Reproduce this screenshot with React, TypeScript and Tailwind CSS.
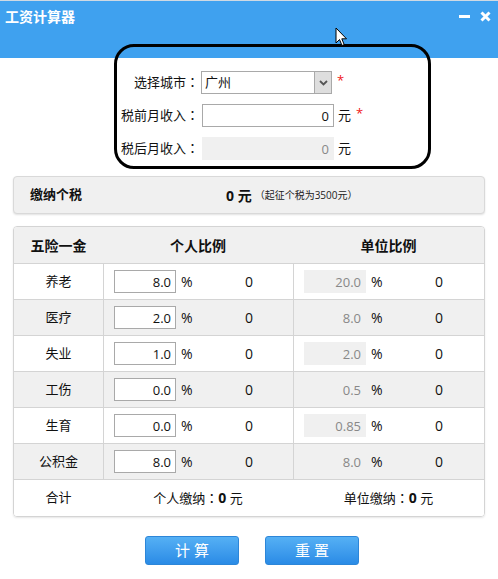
import React from 'react';

const rows = [
  { name: '养老', personal: '8.0', company: '20.0' },
  { name: '医疗', personal: '2.0', company: '8.0' },
  { name: '失业', personal: '1.0', company: '2.0' },
  { name: '工伤', personal: '0.0', company: '0.5' },
  { name: '生育', personal: '0.0', company: '0.85' },
  { name: '公积金', personal: '8.0', company: '8.0' },
];

// full-width colon, centred like the YaHei one in the design
function Colon() {
  return <span className="font-['Noto_Sans_CJK_TC',sans-serif]">：</span>;
}

function RateCell({ value, editable }: { value: string; editable: boolean }) {
  return (
    <div className="flex h-full items-center border-l border-[#d4d4d4] pl-[10px]">
      {editable ? (
        <input
          defaultValue={value}
          className="h-[23px] w-[62px] border border-[#a9a9a9] bg-white pr-[4px] text-right text-[13px] text-[#111] outline-none"
        />
      ) : (
        <input
          readOnly
          value={value}
          className="h-[23px] w-[62px] bg-[#f0f0f0] pr-[5px] text-right text-[13px] text-[#888] outline-none"
        />
      )}
      <span className="ml-[5px] w-[16px] text-[14px] text-[#111]">%</span>
      <span className="ml-[32px] w-[40px] text-center text-[14px] text-[#111]">0</span>
    </div>
  );
}

function Asterisk() {
  return <span className="ml-[5px] -mt-[4px] text-[13px] text-[#f01818]">*</span>;
}

export default function App() {
  return (
    <div className="relative h-[579px] w-[498px] overflow-hidden bg-white font-['Open_Sans','Noto_Sans_CJK_SC',sans-serif] text-[#111]">
      <header className="flex h-[58px] items-start justify-between border-t border-[#cfd9e3] bg-[#3fa1ef] px-[5px] pt-[6px]">
        <h1 className="text-[14px] font-bold leading-[20px] text-white">工资计算器</h1>
        <div className="mr-[2px] mt-[4px] flex items-center gap-[10px]">
          <span className="block h-[3px] w-[11px] bg-white" />
          <svg width="11" height="11" viewBox="0 0 11 11">
            <path d="M1.5 1.5 L9.5 9.5 M9.5 1.5 L1.5 9.5" stroke="white" strokeWidth="3" />
          </svg>
        </div>
      </header>

      <section className="flex flex-col gap-[10px] pt-[13px]">
        <div className="flex h-[23px] items-center">
          <label className="w-[201px] pr-[2px] text-right text-[13px]">
            选择城市<Colon />
          </label>
          <div className="flex h-[23px] w-[131px] items-center border border-[#a9a9a9] bg-white">
            <span className="flex-1 pl-[3px] text-[13px]">广州</span>
            <span className="flex h-full w-[17px] items-center justify-center border-l border-[#a9a9a9] bg-[#dedede]">
              <svg width="9" height="6" viewBox="0 0 9 6">
                <path d="M1 1 L4.5 4.5 L8 1" fill="none" stroke="#555" strokeWidth="1.8" />
              </svg>
            </span>
          </div>
          <Asterisk />
        </div>
        <div className="flex h-[23px] items-center">
          <label className="w-[202px] pr-[3px] text-right text-[13px]">
            税前月收入<Colon />
          </label>
          <input
            defaultValue="0"
            className="h-[23px] w-[132px] border border-[#a9a9a9] bg-white pr-[4px] text-right text-[13px] outline-none"
          />
          <span className="ml-[4px] text-[13px]">元</span>
          <Asterisk />
        </div>
        <div className="flex h-[23px] items-center">
          <label className="w-[202px] pr-[3px] text-right text-[13px]">
            税后月收入<Colon />
          </label>
          <input
            readOnly
            value="0"
            className="h-[23px] w-[132px] bg-[#f0f0f0] pr-[5px] text-right text-[13px] text-[#888] outline-none"
          />
          <span className="ml-[4px] text-[13px]">元</span>
        </div>
      </section>

      <div className="mx-[13px] mt-[16px] flex h-[38px] items-center rounded-[4px] border border-[#d9d9d9] bg-[#f0f0f0] shadow-[0_1px_2px_rgba(0,0,0,0.12)]">
        <span className="w-[212px] pl-[16px] text-[13px] font-bold">缴纳个税</span>
        <span className="text-[14px] font-bold">0 元</span>
        <span className="ml-[3px] text-[10px] text-[#222]">（起征个税为3500元）</span>
      </div>

      <div className="mx-[13px] mt-[12px] overflow-hidden rounded-[4px] border border-[#d4d4d4] shadow-[0_1px_2px_rgba(0,0,0,0.1)]">
        <div className="grid h-[36px] grid-cols-[89px_190px_1fr] items-center bg-[#f0f0f0] text-[14px] font-bold">
          <span className="text-center">五险一金</span>
          <span className="text-center">个人比例</span>
          <span className="text-center">单位比例</span>
        </div>
        {rows.map((row, i) => (
          <div
            key={row.name}
            className={`grid h-[36px] grid-cols-[89px_190px_1fr] border-t border-[#d4d4d4] ${i % 2 === 1 ? 'bg-[#f0f0f0]' : 'bg-white'}`}
          >
            <span className="flex items-center justify-center text-[13px]">{row.name}</span>
            <RateCell value={row.personal} editable />
            <RateCell value={row.company} editable={false} />
          </div>
        ))}
        <div className="grid h-[37px] grid-cols-[89px_190px_1fr] items-center border-t border-[#d4d4d4] bg-white text-[13px]">
          <span className="text-center">合计</span>
          <span className="text-center">
            个人缴纳<Colon />
            <b className="text-[14px]">0</b> 元
          </span>
          <span className="text-center">
            单位缴纳<Colon />
            <b className="text-[14px]">0</b> 元
          </span>
        </div>
      </div>

      <div className="mt-[19px] flex justify-center gap-[26px] pl-[6px]">
        <button className="h-[29px] w-[94px] rounded-[3px] border border-[#2d86d8] bg-gradient-to-b from-[#55b0f4] to-[#2a8be6] text-[15px] text-white">
          计 算
        </button>
        <button className="h-[29px] w-[94px] rounded-[3px] border border-[#2d86d8] bg-gradient-to-b from-[#55b0f4] to-[#2a8be6] text-[15px] text-white">
          重 置
        </button>
      </div>

      {/* annotation frame drawn over the form */}
      <div className="pointer-events-none absolute left-[114px] top-[44px] h-[125px] w-[317px] rounded-[20px] border-[3px] border-black" />

      <svg className="pointer-events-none absolute left-[335px] top-[27px]" width="13" height="20" viewBox="0 0 13 20">
        <path d="M1 1 L1 16 L4.5 12.5 L7 18.5 L9.2 17.6 L6.8 11.8 L11.5 11.8 Z" fill="white" stroke="black" strokeWidth="1" />
      </svg>
    </div>
  );
}
